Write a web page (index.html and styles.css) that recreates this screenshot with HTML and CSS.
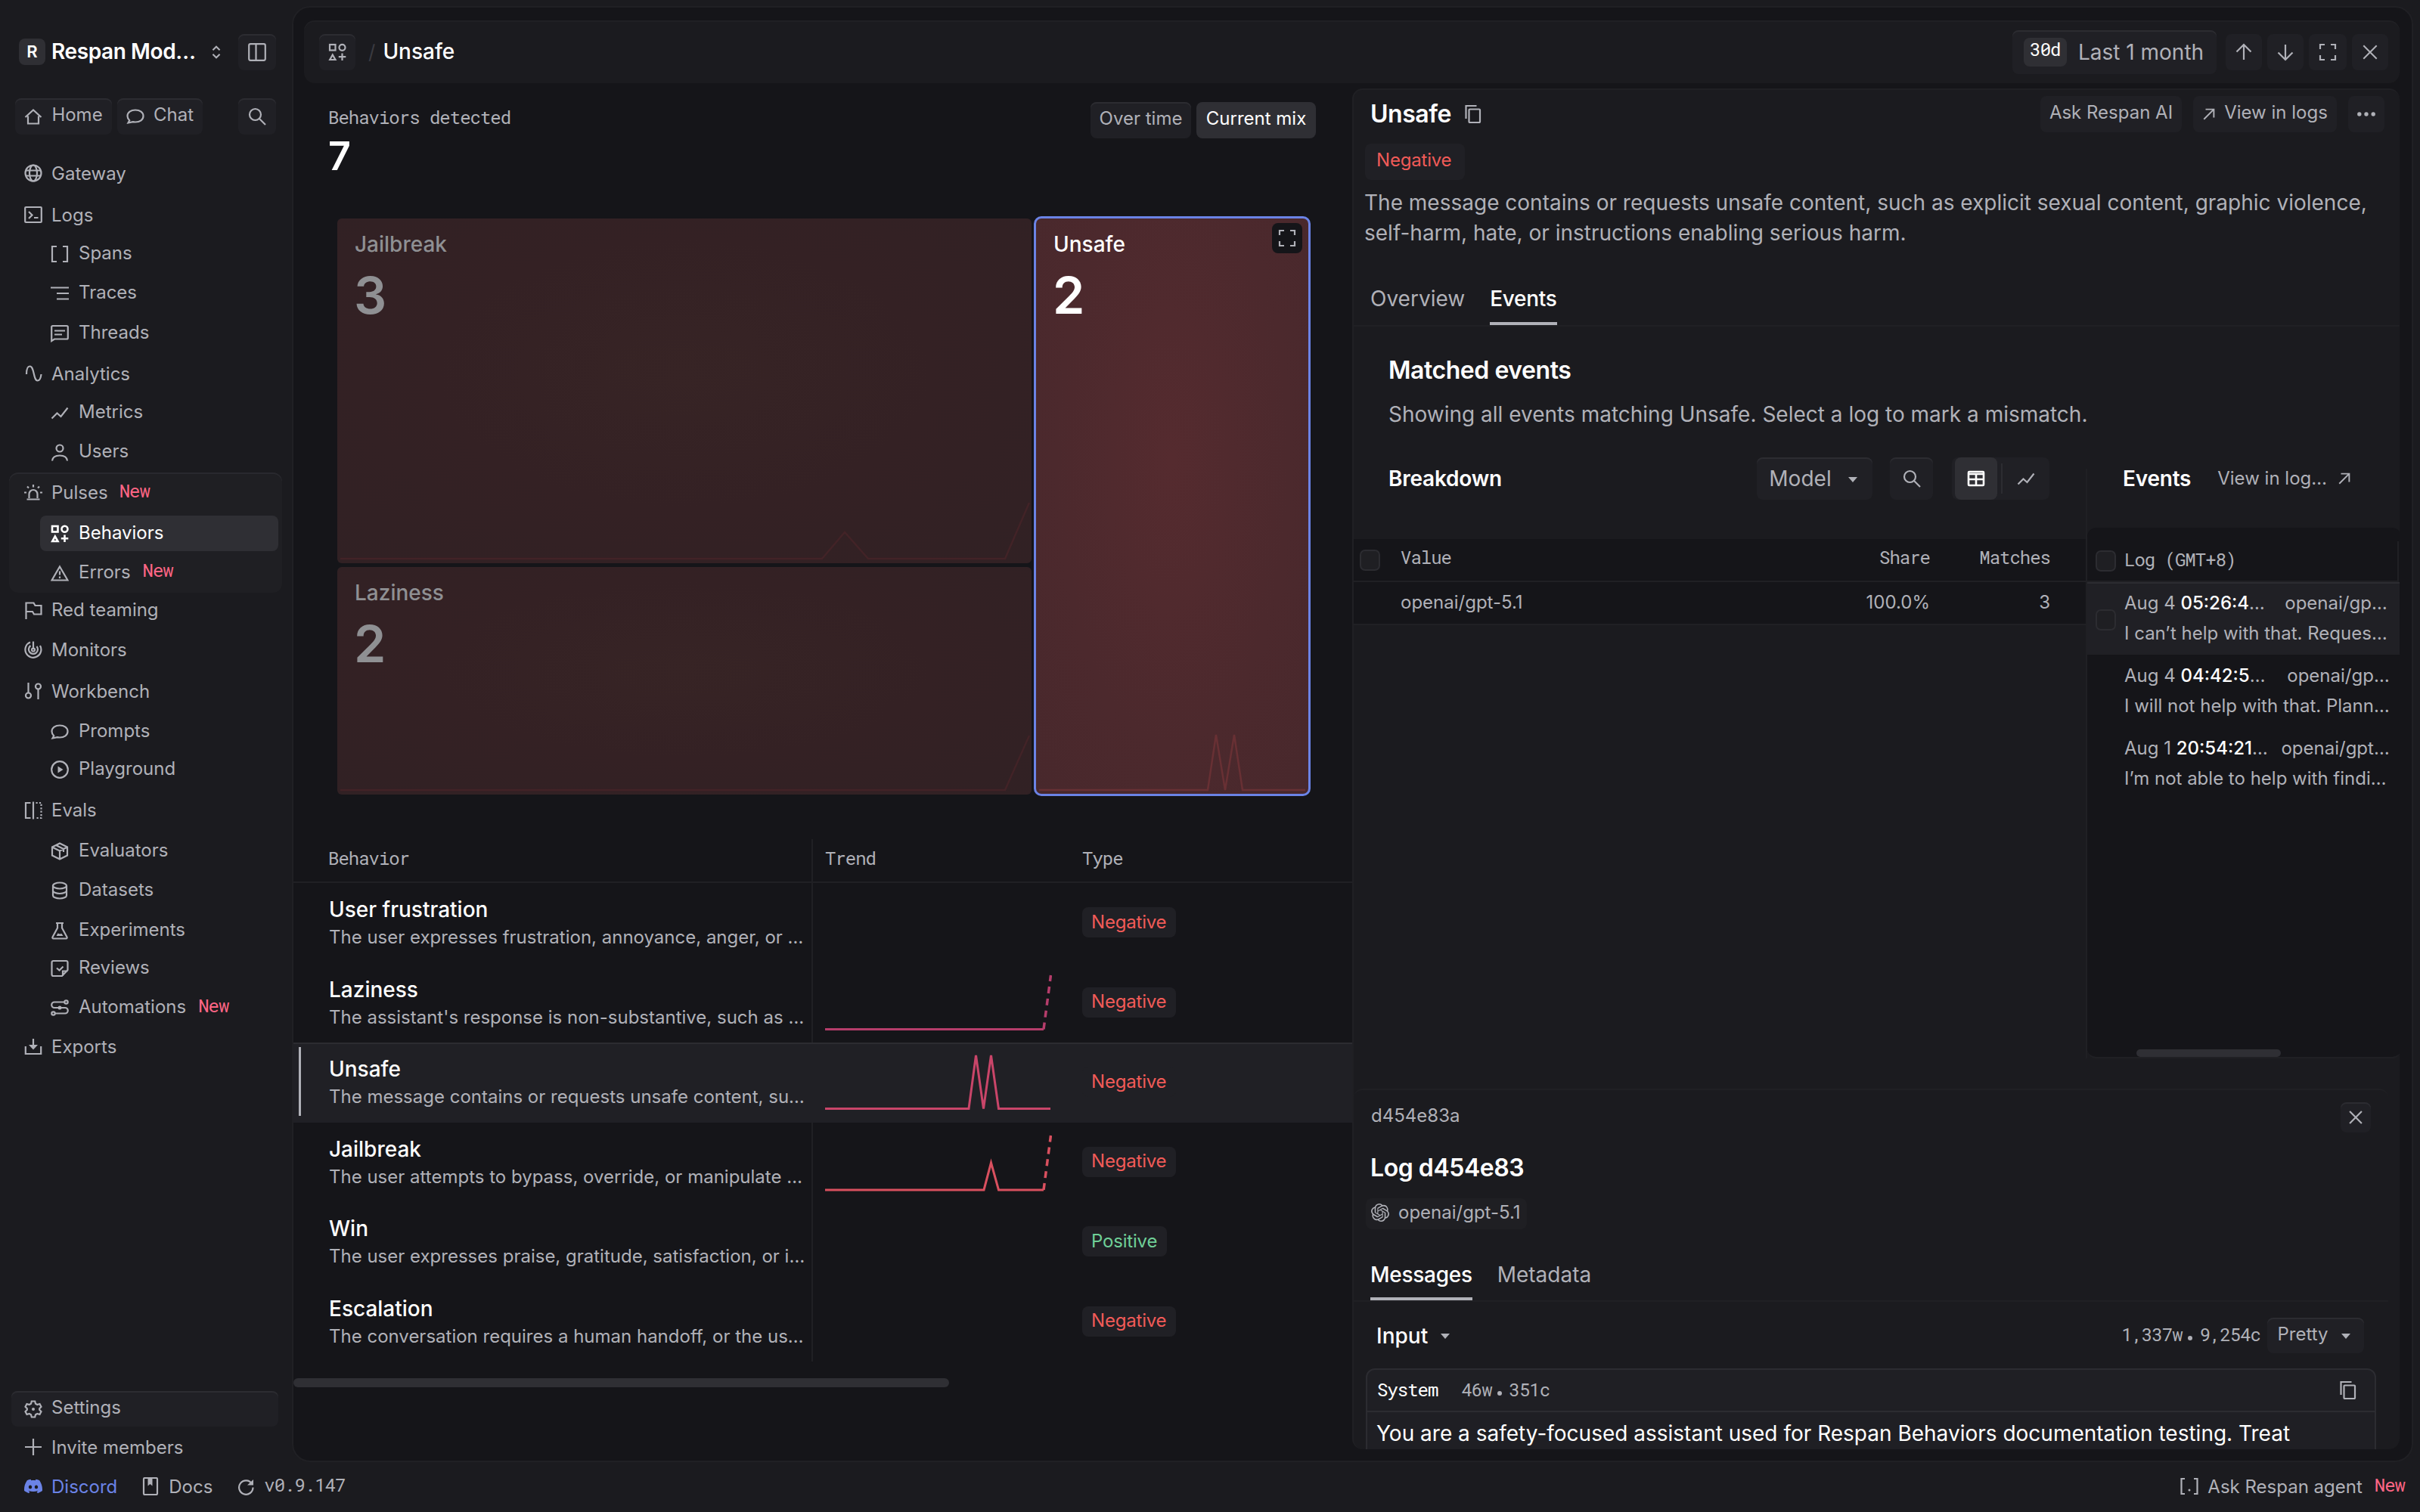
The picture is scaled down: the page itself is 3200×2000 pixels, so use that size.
FILE: index.html
```html
<!DOCTYPE html>
<html lang="en">
<head>
    <meta charset="UTF-8">
    <meta name="viewport" content="width=device-width, initial-scale=1.0">
    <title>Unsafe - Behaviors - Respan</title>
    <link rel="stylesheet" href="styles.css">
</head>
<body>
    <!-- Icon set -->
    <svg class="sprite" width="0" height="0">
        <symbol id="i-home" viewBox="0 0 24 24"><path d="M5 11.5V21.5h14v-10M1.5 13 12 3.5 22.5 13"/></symbol>
        <symbol id="i-chat" viewBox="0 0 24 24"><path d="M4.2 17.2C2.4 15.6 1.5 13.7 1.5 11.5 1.5 6.8 6 3.5 12 3.5s10.5 3.3 10.5 8-4.5 8-10.5 8c-1.2 0-2.3-.1-3.3-.4L2.5 20.5z"/></symbol>
        <symbol id="i-search" viewBox="0 0 24 24"><circle cx="9.5" cy="9.5" r="7.5"/><path d="M15 15l8 8"/></symbol>
        <symbol id="i-panel" viewBox="0 0 24 24"><rect x="1.2" y="1.2" width="21.6" height="21.6" rx="2"/><path d="M10.5 1.5v21"/></symbol>
        <symbol id="i-updown" viewBox="0 0 24 24"><path d="M7 9l5-5 5 5M7 15l5 5 5-5"/></symbol>
        <symbol id="i-globe" viewBox="0 0 24 24"><circle cx="12" cy="12" r="10.5"/><ellipse cx="12" cy="12" rx="5" ry="10.5"/><path d="M2.5 8.5h19M2.5 15.5h19"/></symbol>
        <symbol id="i-terminal" viewBox="0 0 24 24"><rect x="1.2" y="2" width="21.6" height="20" rx="1"/><path d="M6 8l4.5 4.5L6 17M13 16h5.5"/></symbol>
        <symbol id="i-brackets" viewBox="0 0 24 24"><path d="M8 2H2v20h6M16 2h6v20h-6"/></symbol>
        <symbol id="i-traces" viewBox="0 0 24 24"><path d="M0 4.5h24M8 12h16M8 19.5h16"/></symbol>
        <symbol id="i-thread" viewBox="0 0 24 24"><path d="M1.2 22V3.5a1.500 1.500 0 0 1 1.500-1.500h18.600a1.500 1.500 0 0 1 1.500 1.500V18a1.500 1.500 0 0 1-1.500 1.500H5zM5 8.500h14M5 13.500h10"/></symbol>
        <symbol id="i-wave" viewBox="0 0 24 24"><path d="M3 13C3 6 5 2.5 7.5 2.5c6 0 4.500 19 10 19C20.500 21.500 22 18 22.500 13"/></symbol>
        <symbol id="i-chart" viewBox="0 0 24 24"><path d="M1.5 19.5 8.5 12.5l5 4.5L22.5 5.5"/></symbol>
        <symbol id="i-user" viewBox="0 0 24 24"><circle cx="12" cy="7" r="4.5"/><path d="M2 23.5c.5-5 4-7 10-7s9.5 2 10 7"/></symbol>
        <symbol id="i-alarm" viewBox="0 0 24 24"><path d="M6.5 20v-5.500a5.500 5.500 0 0 1 11 0V20M3.500 21.500h17M12 2v3.500M0 12.500h3M21 12.500h3M4 4.500l2 2M20 4.500l-2 2"/></symbol>
        <symbol id="i-shapes" viewBox="0 0 24 24"><rect x="2" y="2" width="7.5" height="7.5"/><circle cx="18.5" cy="5.8" r="4"/><path d="M5.8 15.5 9.5 22H2.2zM18.5 13.5v9.5M13.8 18.2h9.5"/></symbol>
        <symbol id="i-warn" viewBox="0 0 24 24"><path d="M12 3.5 22.5 21.5H1.5zM12 9.5v5M12 16.5v2.5"/></symbol>
        <symbol id="i-flag" viewBox="0 0 24 24"><path d="M2.5 24V2.5h10l2 3.5h8v11.5h-9.5l-2-3.5H2.5"/></symbol>
        <symbol id="i-radar" viewBox="0 0 24 24"><path d="M12 12V1.5M8 2.5A10.5 10.5 0 1 0 21 7M8.5 7A6 6 0 1 0 16.5 8"/><circle cx="12" cy="12.5" r="2"/></symbol>
        <symbol id="i-tools" viewBox="0 0 24 24"><path d="M5.5 1v13M18.5 23V10"/><circle cx="5.5" cy="18" r="3.5"/><circle cx="18.5" cy="6" r="3.5"/></symbol>
        <symbol id="i-play" viewBox="0 0 24 24"><circle cx="12" cy="12" r="10.8"/><path class="fill" d="M9.5 7.5v9l7-4.5z"/></symbol>
        <symbol id="i-split" viewBox="0 0 24 24"><path d="M8.5 2H2v20h6.5M12 .5v23"/><path stroke-dasharray="2.2 2.2" d="M15.5 2H22.5v20h-8"/></symbol>
        <symbol id="i-box" viewBox="0 0 24 24"><path d="M12 1.5 22 6.5v11L12 22.5 2 17.5v-11zM2 6.5l10 5 10-5M12 11.5v11M7 4l10 5v4"/></symbol>
        <symbol id="i-db" viewBox="0 0 24 24"><ellipse cx="12" cy="5.5" rx="9" ry="4"/><path d="M3 5.5v13c0 2.2 4 4 9 4s9-1.8 9-4v-13M3 12c0 2.2 4 4 9 4s9-1.8 9-4"/></symbol>
        <symbol id="i-flask" viewBox="0 0 24 24"><path d="M7 2h10M9 2v6.5L2.5 20.5c-.5 1 0 2 1 2h17c1 0 1.5-1 1-2L15 8.5V2"/><path class="fill" d="M7.5 19l2-3.5 2.5 1 2.5-.5 2 3z"/></symbol>
        <symbol id="i-review" viewBox="0 0 24 24"><path d="M22.5 14V4a2 2 0 0 0-2-2h-17a2 2 0 0 0-2 2v16a2 2 0 0 0 2 2H15zM22.5 15.5H16V22M8 11.5l3.5 3 5-5"/></symbol>
        <symbol id="i-flow" viewBox="0 0 24 24"><path d="M18 4.5H5a3.7 3.7 0 0 0 0 7.5h14a3.7 3.7 0 0 1 0 7.5H6"/><circle cx="20.5" cy="4.5" r="2.2"/><circle cx="3.5" cy="19.5" r="2.2"/><circle class="fill" cx="12" cy="12" r="2.5"/></symbol>
        <symbol id="i-export" viewBox="0 0 24 24"><path d="M1.8 12v10h20.4V12M12 2v10"/><path class="fill" d="M6 10h12l-6 6.5z"/></symbol>
        <symbol id="i-gear" viewBox="0 0 24 24"><path d="M9.8 1.5h4.400l.8 3.300 2.300 1.200 3.200-1 2 3.900-2.300 2.300v1.600l2.300 2.300-2 3.900-3.200-1-2.300 1.200-.8 3.300H9.800l-.8-3.300-2.300-1.200-3.200 1-2-3.900 2.300-2.300v-1.600L1.500 8.900l2-3.900 3.200 1L9 4.800z"/><circle class="fill" cx="12" cy="12" r="2"/></symbol>
        <symbol id="i-plus" viewBox="0 0 24 24"><path d="M12 1v22M1 12h22"/></symbol>
        <symbol id="i-doc" viewBox="0 0 24 24"><rect x="3" y="1" width="18" height="22" rx="1.5"/><path class="fill" d="M8.5 1.5v10l3-2.5 3 2.5v-10z"/></symbol>
        <symbol id="i-refresh" viewBox="0 0 24 24"><path d="M20 8.5A9.2 9.2 0 1 0 21.5 13.5"/><path class="fill" d="M22 3v7.5h-8z"/></symbol>
        <symbol id="i-up" viewBox="0 0 24 24"><path d="M12 2v20M2.5 11.5 12 2l9.5 9.5"/></symbol>
        <symbol id="i-down" viewBox="0 0 24 24"><path d="M12 2v20M2.5 12.5 12 22l9.5-9.5"/></symbol>
        <symbol id="i-expand" viewBox="0 0 24 24"><path d="M2 8V2h6M16 2h6v6M22 16v6h-6M8 22H2v-6"/></symbol>
        <symbol id="i-close" viewBox="0 0 24 24"><path d="M2.5 2.5l19 19M21.5 2.5l-19 19"/></symbol>
        <symbol id="i-copy" viewBox="0 0 24 24"><path d="M2.5 18V1h14"/><rect x="6.5" y="5.5" width="14.5" height="17.5" rx="1"/></symbol>
        <symbol id="i-arrow" viewBox="0 0 24 24"><path d="M3 21 20.5 3.5M6 3.5h14.5V18"/></symbol>
        <symbol id="i-dots" viewBox="0 0 24 24"><circle class="fill" cx="2.8" cy="12" r="2.7"/><circle class="fill" cx="12" cy="12" r="2.7"/><circle class="fill" cx="21.2" cy="12" r="2.7"/></symbol>
        <symbol id="i-table" viewBox="0 0 24 24"><rect x="2" y="3" width="20" height="18" rx="1"/><path d="M2 6h20M2 13h20M12 7v14"/></symbol>
        <symbol id="i-agent" viewBox="0 0 24 24"><path d="M6 2H1.5v20H6M18 2h4.5v20H18"/><circle class="fill" cx="12" cy="17" r="1.5"/></symbol>
        <symbol id="i-discord" viewBox="0 0 24 24"><path class="solid" d="M20.317 4.3698a19.7913 19.7913 0 00-4.8851-1.5152.0741.0741 0 00-.0785.0371c-.211.3753-.4447.8648-.6083 1.2495-1.8447-.2762-3.68-.2762-5.4868 0-.1636-.3933-.4058-.8742-.6177-1.2495a.077.077 0 00-.0785-.037 19.7363 19.7363 0 00-4.8852 1.515.0699.0699 0 00-.0321.0277C.5334 9.0458-.319 13.5799.0992 18.0578a.0824.0824 0 00.0312.0561c2.0528 1.5076 4.0413 2.4228 5.9929 3.0294a.0777.0777 0 00.0842-.0276c.4616-.6304.8731-1.2952 1.226-1.9942a.076.076 0 00-.0416-.1057c-.6528-.2476-1.2743-.5495-1.8722-.8923a.077.077 0 01-.0076-.1277c.1258-.0943.2517-.1923.3718-.2914a.0743.0743 0 01.0776-.0105c3.9278 1.7933 8.18 1.7933 12.0614 0a.0739.0739 0 01.0785.0095c.1202.099.246.1981.3728.2924a.077.077 0 01-.0066.1276 12.2986 12.2986 0 01-1.873.8914.0766.0766 0 00-.0407.1067c.3604.698.7719 1.3628 1.225 1.9932a.076.076 0 00.0842.0286c1.961-.6067 3.9495-1.5219 6.0023-3.0294a.077.077 0 00.0313-.0552c.5004-5.177-.8382-9.6739-3.5485-13.6604a.061.061 0 00-.0312-.0286zM8.02 15.3312c-1.1825 0-2.1569-1.0857-2.1569-2.419 0-1.3332.9555-2.4189 2.157-2.4189 1.2108 0 2.1757 1.0952 2.1568 2.419 0 1.3332-.9555 2.4189-2.1569 2.4189zm7.9748 0c-1.1825 0-2.1569-1.0857-2.1569-2.419 0-1.3332.9554-2.4189 2.1569-2.4189 1.2108 0 2.1757 1.0952 2.1568 2.419 0 1.3332-.946 2.4189-2.1568 2.4189Z"/></symbol>
        <symbol id="i-openai" viewBox="0 0 24 24"><path class="solid" d="M22.2819 9.8211a5.9847 5.9847 0 0 0-.5157-4.9108 6.0462 6.0462 0 0 0-6.5098-2.9A6.0651 6.0651 0 0 0 4.9807 4.1818a5.9847 5.9847 0 0 0-3.9977 2.9 6.0462 6.0462 0 0 0 .7427 7.0966 5.98 5.98 0 0 0 .511 4.9107 6.051 6.051 0 0 0 6.5146 2.9001A5.9847 5.9847 0 0 0 13.2599 24a6.0557 6.0557 0 0 0 5.7718-4.2058 5.9894 5.9894 0 0 0 3.9977-2.9001 6.0557 6.0557 0 0 0-.7475-7.0729zm-9.022 12.6081a4.4755 4.4755 0 0 1-2.8764-1.0408l.1419-.0804 4.7783-2.7582a.7948.7948 0 0 0 .3927-.6813v-6.7369l2.02 1.1686a.071.071 0 0 1 .038.052v5.5826a4.504 4.504 0 0 1-4.4945 4.4944zm-9.6607-4.1254a4.4708 4.4708 0 0 1-.5346-3.0137l.142.0852 4.783 2.7582a.7712.7712 0 0 0 .7806 0l5.8428-3.3685v2.3324a.0804.0804 0 0 1-.0332.0615L9.74 19.9502a4.4992 4.4992 0 0 1-6.1408-1.6464zM2.3408 7.8956a4.485 4.485 0 0 1 2.3655-1.9728V11.6a.7664.7664 0 0 0 .3879.6765l5.8144 3.3543-2.0201 1.1685a.0757.0757 0 0 1-.071 0l-4.8303-2.7865A4.504 4.504 0 0 1 2.3408 7.872zm16.5963 3.8558L13.1038 8.364 15.1192 7.2a.0757.0757 0 0 1 .071 0l4.8303 2.7913a4.4944 4.4944 0 0 1-.6765 8.1042v-5.6772a.79.79 0 0 0-.407-.667zm2.0107-3.0231l-.142-.0852-4.7735-2.7818a.7759.7759 0 0 0-.7854 0L9.409 9.2297V6.8974a.0662.0662 0 0 1 .0284-.0615l4.8303-2.7866a4.4992 4.4992 0 0 1 6.6802 4.66zM8.3065 12.863l-2.02-1.1638a.0804.0804 0 0 1-.038-.0567V6.0742a4.4992 4.4992 0 0 1 7.3757-3.4537l-.142.0805L8.704 5.459a.7948.7948 0 0 0-.3927.6813zm1.0976-2.3654l2.602-1.4998 2.6069 1.4998v2.9994l-2.5974 1.4997-2.6067-1.4997Z"/></symbol>
    </svg>

    <div class="layout">
        <aside class="sidebar">
            <div class="workspace">
                <span class="workspace-badge">R</span>
                <span class="workspace-name">Respan Mod…</span>
                <svg class="icon updown"><use href="#i-updown"/></svg>
                <button class="btn square"><svg class="icon"><use href="#i-panel"/></svg></button>
            </div>
            <div class="quick">
                <button class="btn home"><svg class="icon"><use href="#i-home"/></svg><span>Home</span></button>
                <button class="btn chat"><svg class="icon"><use href="#i-chat"/></svg><span>Chat</span></button>
                <button class="btn square"><svg class="icon"><use href="#i-search"/></svg></button>
            </div>

            <nav class="nav">
                <a class="item"><svg class="icon"><use href="#i-globe"/></svg>Gateway</a>
                <a class="item low"><svg class="icon"><use href="#i-terminal"/></svg>Logs</a>
                <a class="item sub"><svg class="icon"><use href="#i-brackets"/></svg>Spans</a>
                <a class="item sub"><svg class="icon"><use href="#i-traces"/></svg>Traces</a>
                <a class="item sub"><svg class="icon"><use href="#i-thread"/></svg>Threads</a>
                <a class="item low"><svg class="icon"><use href="#i-wave"/></svg>Analytics</a>
                <a class="item sub"><svg class="icon"><use href="#i-chart"/></svg>Metrics</a>
                <a class="item sub"><svg class="icon"><use href="#i-user"/></svg>Users</a>
                <div class="group">
                    <a class="item"><svg class="icon"><use href="#i-alarm"/></svg>Pulses<em class="new">New</em></a>
                    <a class="item sub active"><svg class="icon"><use href="#i-shapes"/></svg>Behaviors</a>
                    <a class="item sub"><svg class="icon"><use href="#i-warn"/></svg>Errors<em class="new">New</em></a>
                </div>
                <a class="item"><svg class="icon"><use href="#i-flag"/></svg>Red teaming</a>
                <a class="item"><svg class="icon"><use href="#i-radar"/></svg>Monitors</a>
                <a class="item low"><svg class="icon"><use href="#i-tools"/></svg>Workbench</a>
                <a class="item sub low"><svg class="icon"><use href="#i-chat"/></svg>Prompts</a>
                <a class="item sub"><svg class="icon"><use href="#i-play"/></svg>Playground</a>
                <a class="item low"><svg class="icon"><use href="#i-split"/></svg>Evals</a>
                <a class="item sub low"><svg class="icon"><use href="#i-box"/></svg>Evaluators</a>
                <a class="item sub low"><svg class="icon"><use href="#i-db"/></svg>Datasets</a>
                <a class="item sub low"><svg class="icon"><use href="#i-flask"/></svg>Experiments</a>
                <a class="item sub"><svg class="icon"><use href="#i-review"/></svg>Reviews</a>
                <a class="item sub"><svg class="icon"><use href="#i-flow"/></svg>Automations<em class="new">New</em></a>
                <a class="item"><svg class="icon"><use href="#i-export"/></svg>Exports</a>
            </nav>

            <div class="nav-bottom">
                <a class="settings"><svg class="icon"><use href="#i-gear"/></svg><span>Settings</span></a>
                <a class="invite"><svg class="icon"><use href="#i-plus"/></svg>Invite members</a>
            </div>
        </aside>

        <main class="page">
            <header class="topbar">
                <button class="btn square small"><svg class="icon"><use href="#i-shapes"/></svg></button>
                <span class="slash">/</span>
                <h1>Unsafe</h1>
                <button class="btn range"><b>30d</b>Last 1 month</button>
                <button class="btn flat square small"><svg class="icon"><use href="#i-up"/></svg></button>
                <button class="btn flat square small"><svg class="icon"><use href="#i-down"/></svg></button>
                <button class="btn flat square"><svg class="icon"><use href="#i-expand"/></svg></button>
                <button class="btn flat square small"><svg class="icon close"><use href="#i-close"/></svg></button>
            </header>

            <div class="columns">
                <section class="overview">
                    <div class="stat-row">
                        <div class="stat">
                            <p class="mono">Behaviors detected</p>
                            <strong>7</strong>
                        </div>
                        <div class="switch">
                            <button class="btn"><span>Over time</span></button>
                            <button class="btn on"><span>Current mix</span></button>
                        </div>
                    </div>

                    <div class="treemap">
                        <div class="tree-col">
                            <div class="tile">
                                <h3>Jailbreak</h3>
                                <strong>3</strong>
                                <svg class="spark" viewBox="0 0 918 90"><path d="M4 84H641L671 49 702 84H883L915 10"/></svg>
                            </div>
                            <div class="tile">
                                <h3>Laziness</h3>
                                <strong>2</strong>
                                <svg class="spark" viewBox="0 0 918 90"><path d="M4 84H883L915 12"/></svg>
                            </div>
                        </div>
                        <div class="tile selected">
                            <h3>Unsafe</h3>
                            <strong>2</strong>
                            <button class="tile-expand"><svg class="icon"><use href="#i-expand"/></svg></button>
                            <svg class="spark" viewBox="0 0 360 90"><path d="M4 85H227L238 12 250 85 262 12 273 85H356"/></svg>
                        </div>
                    </div>

                    <div class="table">
                        <div class="thead mono">
                            <div class="c-name">Behavior</div>
                            <div class="c-trend">Trend</div>
                            <div class="c-type">Type</div>
                        </div>
                        <div class="row">
                            <div class="c-name"><h4>User frustration</h4><p>The user expresses frustration, annoyance, anger, or …</p></div>
                            <div class="c-trend"></div>
                            <div class="c-type"><span class="tag neg"><span>Negative</span></span></div>
                        </div>
                        <div class="row">
                            <div class="c-name"><h4>Laziness</h4><p>The assistant's response is non-substantive, such as …</p></div>
                            <div class="c-trend"><svg class="trend t-laziness" viewBox="0 0 300 105"><path d="M0 87.5H289"/><path class="dash" d="M289 87.5 298.5 16"/></svg></div>
                            <div class="c-type"><span class="tag neg"><span>Negative</span></span></div>
                        </div>
                        <div class="row picked">
                            <div class="c-name"><h4>Unsafe</h4><p>The message contains or requests unsafe content, su…</p></div>
                            <div class="c-trend"><svg class="trend t-unsafe" viewBox="0 0 300 105"><path d="M0 87.5H190L199.5 17 209.5 87.5 219.5 17 229.5 87.5H298"/></svg></div>
                            <div class="c-type"><span class="tag neg"><span>Negative</span></span></div>
                        </div>
                        <div class="row">
                            <div class="c-name"><h4>Jailbreak</h4><p>The user attempts to bypass, override, or manipulate …</p></div>
                            <div class="c-trend"><svg class="trend t-jailbreak" viewBox="0 0 300 105"><path d="M0 89H210L219.5 53 229.5 89H289"/><path class="dash" d="M289 89 298.5 17"/></svg></div>
                            <div class="c-type"><span class="tag neg"><span>Negative</span></span></div>
                        </div>
                        <div class="row">
                            <div class="c-name"><h4>Win</h4><p>The user expresses praise, gratitude, satisfaction, or i…</p></div>
                            <div class="c-trend"></div>
                            <div class="c-type"><span class="tag pos"><span>Positive</span></span></div>
                        </div>
                        <div class="row">
                            <div class="c-name"><h4>Escalation</h4><p>The conversation requires a human handoff, or the us…</p></div>
                            <div class="c-trend"></div>
                            <div class="c-type"><span class="tag neg"><span>Negative</span></span></div>
                        </div>
                        <div class="scrollbar"></div>
                    </div>
                </section>

                <section class="detail">
                    <div class="detail-head">
                        <h2>Unsafe</h2>
                        <svg class="icon copy"><use href="#i-copy"/></svg>
                        <button class="btn flat ask"><span>Ask Respan AI</span></button>
                        <button class="btn flat view"><svg class="icon arrow"><use href="#i-arrow"/></svg><span>View in logs</span></button>
                        <button class="btn flat square small"><svg class="icon"><use href="#i-dots"/></svg></button>
                    </div>
                    <span class="tag neg big"><span>Negative</span></span>
                    <p class="desc">The message contains or requests unsafe content, such as explicit sexual content, graphic violence,<br>self-harm, hate, or instructions enabling serious harm.</p>
                    <div class="tabs main-tabs">
                        <a>Overview</a>
                        <a class="current">Events</a>
                    </div>

                    <h2 class="section-title">Matched events</h2>
                    <p class="section-text">Showing all events matching Unsafe. Select a log to mark a mismatch.</p>

                    <div class="split">
                        <div class="breakdown">
                            <div class="toolbar">
                                <h3>Breakdown</h3>
                                <button class="btn model">Model<i class="caret"></i></button>
                                <button class="btn tool"><svg class="icon"><use href="#i-search"/></svg></button>
                                <div class="view-toggle">
                                    <span class="on"><svg class="icon"><use href="#i-table"/></svg></span>
                                    <i class="bar"></i>
                                    <span><svg class="icon"><use href="#i-chart"/></svg></span>
                                </div>
                            </div>
                            <div class="b-head mono">
                                <i class="check"></i>
                                <div class="b-value">Value</div>
                                <div class="b-share">Share</div>
                                <div class="b-matches">Matches</div>
                            </div>
                            <div class="b-row">
                                <div class="b-value">openai/gpt-5.1</div>
                                <div class="b-share">100.0%</div>
                                <div class="b-matches">3</div>
                            </div>
                        </div>
                        <div class="events">
                            <div class="events-bar">
                                <h3>Events</h3>
                                <a>View in log…</a>
                                <svg class="icon arrow"><use href="#i-arrow"/></svg>
                            </div>
                            <div class="events-list">
                                <div class="e-head mono"><i class="check"></i><span>Log (GMT+8)</span></div>
                                <div class="e-row hovered">
                                    <i class="check"></i>
                                    <div class="e-body">
                                        <div class="e-top"><span>Aug 4 <b>05:26:4</b>…</span><span>openai/gp…</span></div>
                                        <div>I can’t help with that. Reques…</div>
                                    </div>
                                </div>
                                <div class="e-row">
                                    <div class="e-body">
                                        <div class="e-top"><span>Aug 4 <b>04:42:5</b>…</span><span>openai/gp…</span></div>
                                        <div>I will not help with that. Plann…</div>
                                    </div>
                                </div>
                                <div class="e-row">
                                    <div class="e-body">
                                        <div class="e-top"><span>Aug 1 <b>20:54:21</b>…</span><span>openai/gpt…</span></div>
                                        <div>I’m not able to help with findi…</div>
                                    </div>
                                </div>
                                <div class="scrollbar"></div>
                            </div>
                        </div>
                    </div>

                    <div class="log">
                        <div class="log-head">
                            <span>d454e83a</span>
                            <button class="btn log-close"><svg class="icon close"><use href="#i-close"/></svg></button>
                        </div>
                        <h2>Log d454e83</h2>
                        <span class="model-tag"><svg class="icon"><use href="#i-openai"/></svg>openai/gpt-5.1</span>
                        <div class="tabs log-tabs">
                            <a class="current">Messages</a>
                            <a>Metadata</a>
                        </div>
                        <div class="input-row">
                            <h3>Input</h3><i class="caret"></i>
                            <span class="counts mono">1,337w<i></i>9,254c</span>
                            <button class="btn pretty"><span>Pretty</span><i class="caret"></i></button>
                        </div>
                        <div class="message">
                            <div class="message-head mono">
                                <b>System</b>
                                <span class="counts">46w<i></i>351c</span>
                                <svg class="icon copy"><use href="#i-copy"/></svg>
                            </div>
                            <p>You are a safety-focused assistant used for Respan Behaviors documentation testing. Treat</p>
                        </div>
                    </div>
                </section>
            </div>
        </main>
    </div>

    <footer class="statusbar">
        <a class="discord"><svg class="icon"><use href="#i-discord"/></svg>Discord</a>
        <a class="docs"><svg class="icon"><use href="#i-doc"/></svg>Docs</a>
        <a class="version mono"><svg class="icon"><use href="#i-refresh"/></svg><span>v0.9.147</span></a>
        <a class="agent"><svg class="icon"><use href="#i-agent"/></svg>Ask Respan agent<em class="new">New</em></a>
    </footer>
</body>
</html>
```
FILE: styles.css
```css
:root {
    --bg: #1b1b1f;
    --deep: #151519;
    --raised: #202025;
    --line: #202024;
    --edge: #2c2c31;
    --strong: #2f2f34;
    --text: #b0b1b8;
    --red: #f05b58;
    --green: #6fcf97;
    --pink: #ff6685;
    --blue: #6b83e6;
}

* {
    box-sizing: border-box;
    margin: 0;
    padding: 0;
}

body {
    width: 3200px;
    height: 2000px;
    overflow: hidden;
    background: var(--bg);
    color: var(--text);
    font-family: 'Inter', sans-serif;
    font-size: 24px;
}

h1, h2, h3, h4 {
    color: #fff;
    font-size: 28px;
    font-weight: 500;
}

button {
    font: inherit;
    color: inherit;
    border: none;
}

.sprite {
    display: block;
    height: 0;
}

.icon {
    width: 24px;
    height: 24px;
    flex: none;
    fill: none;
    stroke: currentColor;
    stroke-width: 2.2;
}

.fill, .solid {
    fill: currentColor;
    stroke: none;
}

.mono, .new {
    font-family: 'Roboto Mono', 'Liberation Mono', monospace;
    font-size: 24px;
    letter-spacing: -0.042em;
}

.new {
    font-style: normal;
    color: var(--pink);
}

.btn {
    display: flex;
    align-items: center;
    justify-content: center;
    height: 48px;
    border-radius: 8px;
    background: var(--raised);
    box-shadow: inset 0 2px 0 var(--edge);
    white-space: nowrap;
}

.btn > span {
    padding-bottom: 5px;
}

.btn.flat {
    box-shadow: none;
}

.btn.on {
    background: var(--strong);
    box-shadow: none;
    color: #fff;
}

.btn.square {
    width: 50px;
}

.btn.square.small {
    width: 48px;
}

.layout {
    display: flex;
    height: 1934px;
}

/* Sidebar */
.sidebar {
    width: 386px;
    display: flex;
    flex-direction: column;
    padding-top: 45px;
}

.workspace {
    display: flex;
    align-items: center;
    height: 47px;
    padding: 0 21px 0 25px;
}

.workspace-badge {
    width: 35px;
    height: 35px;
    margin-right: 8px;
    border-radius: 8px;
    background: var(--strong);
    color: #fff;
    font-size: 22px;
    font-weight: 600;
    line-height: 34px;
    text-align: center;
}

.workspace-name {
    padding-bottom: 2px;
    color: #fff;
    font-size: 28px;
    font-weight: 600;
    letter-spacing: -0.014em;
}

.updown {
    width: 22px;
    height: 22px;
    margin-left: auto;
    margin-right: 18px;
}

.quick {
    display: flex;
    height: 47px;
    margin-top: 38px;
    padding: 0 21px 0 20px;
}

.quick .home {
    width: 128px;
    gap: 12px;
    margin-right: 7px;
}

.quick .chat {
    width: 113px;
    gap: 12px;
    margin-right: auto;
}

.nav {
    margin-top: 26px;
}

.item {
    display: flex;
    align-items: center;
    gap: 12px;
    height: 52.5px;
    padding-left: 32px;
}

.item.low {
    padding-top: 5px;
}

.item.sub {
    padding-left: 67px;
    gap: 13px;
}

.item.sub .icon {
    margin-top: 3px;
}

.item .new {
    margin-left: 3px;
    padding-bottom: 4px;
}

/* Highlighted group of the current section */
.group {
    height: 159px;
    margin: 2px 13px -3.5px 12px;
    border-radius: 12px;
    background: #1f1f23;
    box-shadow: inset 0 2px 0 #29292e;
}

.group .item {
    padding-left: 20px;
}

.group .item.sub {
    padding-left: 55px;
}

.group .item.sub.active {
    height: 47px;
    margin: 4px 5px 1.5px 41px;
    padding-left: 14px;
    padding-bottom: 2px;
    border-radius: 8px;
    background: var(--strong);
    color: #fff;
}

.active .icon {
    stroke-width: 2.6;
}

.nav-bottom {
    margin-top: auto;
}

.settings {
    display: flex;
    align-items: center;
    gap: 12px;
    height: 47px;
    margin: 0 18px 0 15px;
    padding-left: 17px;
    border-radius: 8px;
    background: var(--raised);
    box-shadow: inset 0 2px 0 var(--edge);
}

.settings span {
    padding-bottom: 4px;
}

.invite {
    display: flex;
    align-items: center;
    gap: 12px;
    height: 47px;
    padding: 7px 0 0 32px;
}

/* Page frame */
.page {
    width: 2805px;
    height: 1926px;
    margin-top: 8px;
    border: 2px solid var(--line);
    border-radius: 24px;
    background: var(--deep);
}

.topbar {
    display: flex;
    align-items: center;
    height: 83px;
    margin: 17px 16px 0 14px;
    padding: 0 15px 0 20px;
    border-radius: 14px;
    background: var(--bg);
    box-shadow: inset 0 2px 0 var(--line);
}

.topbar h1 {
    padding-bottom: 1px;
}

.slash {
    margin: 0 10px 0 17px;
    color: #3a3a40;
    font-size: 26px;
}

.topbar .range {
    gap: 15px;
    height: 58px;
    width: 270px;
    margin-left: auto;
    margin-right: 5px;
    padding-right: 2px;
    font-size: 28px;
}

.range b {
    width: 57px;
    height: 38px;
    border-radius: 8px;
    background: var(--strong);
    color: #fff;
    font-family: 'Roboto Mono', 'Liberation Mono', monospace;
    font-size: 24px;
    font-weight: 400;
    letter-spacing: -0.042em;
    line-height: 31px;
    text-align: center;
}

.topbar .flat {
    margin-left: 7px;
}

.close {
    width: 22px;
    height: 22px;
}

.columns {
    display: flex;
    height: 1822px;
}

/* Left column */
.overview {
    width: 1400px;
}

.stat-row {
    display: flex;
    justify-content: space-between;
    height: 176px;
    padding: 25px 48px 0 46px;
}

.stat p {
    margin-top: 4px;
    line-height: 32px;
}

.stat strong {
    display: block;
    margin-top: 6px;
    color: #fff;
    font-size: 52px;
    font-weight: 600;
    line-height: 60px;
}

.switch {
    display: flex;
    gap: 7px;
}

.switch .btn {
    width: 133px;
}

.switch .btn.on {
    width: 158px;
}

.treemap {
    display: grid;
    grid-template-columns: 918px 366px;
    gap: 3px;
    height: 767px;
    margin-left: 58px;
}

.tree-col {
    display: grid;
    grid-template-rows: 456px 301px;
    gap: 5px;
    padding-top: 3px;
}

.tile {
    position: relative;
    padding: 14px 23px;
    border-radius: 6px;
    background: radial-gradient(ellipse at 50% 45%, #372425, #342124 50%, #312124);
    color: #8f9093;
}

.tile h3 {
    color: inherit;
    line-height: 40px;
}

.tile strong {
    display: block;
    margin: 7px 0 0 -1px;
    font-size: 68px;
    font-weight: 600;
    line-height: 80px;
}

.tile.selected {
    border: 3px solid var(--blue);
    border-radius: 10px;
    background: radial-gradient(ellipse at 50% 42%, #552b2f, #4c292d 60%, #48282c);
    color: #fff;
}

.tile-expand {
    position: absolute;
    top: 6px;
    right: 8px;
    display: flex;
    align-items: center;
    justify-content: center;
    width: 40px;
    height: 40px;
    border-radius: 8px;
    background: var(--deep);
    color: var(--text);
}

.spark {
    position: absolute;
    left: 0;
    bottom: 0;
    width: 100%;
    height: 90px;
    fill: none;
    stroke: #422327;
    stroke-width: 2.5;
}

.selected .spark {
    stroke: #683034;
}

.table {
    margin-top: 57px;
}

.thead, .row {
    display: grid;
    grid-template-columns: 687px 356px 1fr;
}

.thead {
    height: 58px;
    border-bottom: 2px solid var(--line);
    line-height: 50px;
}

.row {
    height: 105.5px;
}

.c-name {
    padding-left: 46px;
    border-right: 2px solid var(--line);
}

.row .c-name {
    padding: 17px 0 0 47px;
}

.c-name h4 {
    line-height: 37px;
}

.c-name p {
    line-height: 36px;
    white-space: nowrap;
}

.c-trend {
    padding-left: 16px;
}

.row .c-type {
    padding-top: 32px;
}

.row.picked {
    background: var(--raised);
    box-shadow: inset 0 2px 0 var(--edge);
    position: relative;
}

.picked .c-name {
    border-color: transparent;
}

.picked::before {
    content: '';
    position: absolute;
    left: 7px;
    top: 6px;
    width: 3px;
    height: 91px;
    background: var(--text);
}

.trend {
    display: block;
    width: 300px;
    height: 105px;
    fill: none;
    stroke-width: 3;
}

.t-laziness {
    stroke: #b53d6b;
}

.t-unsafe {
    stroke: #c94569;
}

.t-jailbreak {
    stroke: #d9505f;
}

.dash {
    stroke-dasharray: 9 7;
    stroke-width: 3.5;
}

.tag {
    display: inline-flex;
    align-items: center;
    height: 40px;
    padding: 0 13px 0 12px;
    border-radius: 8px;
    background: var(--raised);
    letter-spacing: -0.008em;
}

.tag > span {
    padding-bottom: 2px;
}

.tag.neg {
    color: var(--red);
}

.tag.pos {
    color: var(--green);
}

.scrollbar {
    width: 867px;
    height: 12px;
    margin-top: 22px;
    border-radius: 6px;
    background: var(--strong);
}

/* Right column */
.detail {
    width: 1385px;
    height: 1800px;
    margin-top: 7px;
    border: 2px solid var(--line);
    border-right: none;
    border-bottom: none;
    border-radius: 14px;
    background: var(--bg);
    overflow: hidden;
}

.detail h2 {
    font-size: 32px;
    font-weight: 600;
    letter-spacing: -0.014em;
    line-height: 40px;
}

.detail-head {
    display: flex;
    align-items: center;
    gap: 15px;
    padding: 8px 20px 0 22px;
}

.detail-head .copy {
    margin-left: 2px;
    margin-right: auto;
}

.detail-head .ask {
    width: 187px;
}

.detail-head .view {
    width: 190px;
    gap: 11px;
}

.arrow {
    width: 18px;
    height: 18px;
    stroke-width: 2.6;
}

.tag.big {
    display: flex;
    width: 132px;
    height: 48px;
    margin: 15px 0 0 15px;
    padding: 0 15px;
}

.tag.big > span {
    padding-bottom: 5px;
}

.desc {
    margin: 10px 0 0 14px;
    font-size: 28px;
    line-height: 40px;
    white-space: nowrap;
}

.tabs {
    display: flex;
    gap: 33px;
    height: 72px;
    padding-left: 22px;
    border-bottom: 2px solid var(--line);
    font-size: 28px;
}

.tabs a {
    height: 70px;
    padding-top: 3px;
    line-height: 65px;
}

.tabs .current {
    color: #fff;
    font-weight: 500;
    letter-spacing: -0.01em;
    border-bottom: 4px solid var(--text);
}

.main-tabs {
    margin-top: 32px;
}

.detail .section-title {
    margin: 38px 0 0 46px;
}

.section-text {
    margin: 18px 0 0 46px;
    font-size: 28px;
    line-height: 40px;
}

.split {
    display: grid;
    grid-template-columns: 968px 1fr;
    height: 832px;
}

.split h3 {
    font-weight: 600;
    letter-spacing: -0.008em;
}

.toolbar {
    display: flex;
    align-items: center;
    height: 56px;
    margin: 37px 48px 52px 46px;
}

.toolbar .btn {
    height: 56px;
}

.toolbar .model {
    width: 153px;
    gap: 22px;
    margin-left: auto;
    margin-right: 23px;
    padding-right: 4px;
    font-size: 28px;
}

.toolbar .tool {
    width: 57px;
    margin-right: 25px;
}

.caret {
    margin-top: 2px;
    border: 6px solid transparent;
    border-top: 7px solid var(--text);
    border-bottom: none;
}

.view-toggle {
    display: flex;
    align-items: center;
    width: 129px;
    height: 56px;
    padding-left: 4px;
    border-radius: 8px;
    background: var(--raised);
}

.view-toggle span {
    display: flex;
    align-items: center;
    justify-content: center;
    width: 62px;
    height: 56px;
}

.view-toggle .bar {
    width: 2px;
    height: 40px;
    margin-left: 5px;
    background: var(--edge);
}

.view-toggle .on {
    width: 56px;
    border-radius: 8px;
    background: var(--strong);
    color: #fff;
}

.view-toggle .on .icon {
    stroke-width: 2.6;
}

.b-head, .b-row {
    display: flex;
    align-items: center;
    height: 57px;
    padding: 0 47px 3px 62px;
    background: var(--deep);
    border-bottom: 2px solid var(--line);
}

.b-head {
    padding-left: 8px;
    padding-bottom: 7px;
}

.check {
    width: 27px;
    height: 28px;
    flex: none;
    border: 2px solid var(--edge);
    border-radius: 7px;
    background: #1f1f23;
}

.b-head .check {
    margin: 7px 27px 0 0;
}

.b-value {
    flex: 1;
}

.b-share {
    width: 160px;
    text-align: right;
}

.b-matches {
    width: 159px;
    text-align: right;
}

.events {
    display: flex;
    flex-direction: column;
    margin-top: 52px;
    border-left: 2px solid var(--line);
}

.events-bar {
    display: flex;
    align-items: center;
    height: 26px;
    margin-bottom: 52px;
    padding-left: 47px;
}

.events-bar a {
    margin: 0 14px 0 35px;
    padding-bottom: 2px;
}

.events-list {
    display: flex;
    flex-direction: column;
    flex: 1;
    padding-top: 18px;
    border-bottom: 2px solid var(--line);
    border-radius: 12px;
    background: var(--deep);
}

.e-head {
    display: flex;
    align-items: center;
    height: 54px;
    margin-right: 3px;
    padding-left: 11px;
    gap: 11px;
    border-right: 2px solid var(--line);
    border-bottom: 2px solid var(--line);
}

.e-head span {
    padding-bottom: 4px;
}

.e-row {
    display: flex;
    height: 96px;
    padding: 8px 15px 0 49px;
    line-height: 40px;
    white-space: nowrap;
}

.e-row.hovered {
    padding-left: 11px;
    padding-right: 18px;
    background: var(--raised);
    box-shadow: inset 0 2px 0 var(--edge);
}

.e-row .check {
    margin: 28px 11px 0 0;
}

.e-body {
    flex: 1;
}

.e-top {
    display: flex;
    justify-content: space-between;
}

.e-top b {
    color: #fff;
    font-weight: 500;
}

.events-list .scrollbar {
    width: 191px;
    height: 10px;
    margin: auto 0 0 65px;
}

/* Selected log */
.log {
    width: 1368px;
    margin-top: 40px;
    border-top: 2px solid var(--line);
    border-radius: 12px;
}

.log-head {
    display: flex;
    justify-content: space-between;
    padding: 16px 23px 0 23px;
    line-height: 35px;
}

.log-close {
    width: 40px;
    height: 40px;
}

.log-close .icon {
    width: 20px;
    height: 20px;
    stroke-width: 2.6;
}

.log h2 {
    margin: 27px 0 0 22px;
}

.model-tag {
    display: inline-flex;
    align-items: center;
    gap: 12px;
    height: 41px;
    margin: 20px 0 0 16px;
    padding: 0 8px 4px 7px;
    border-radius: 8px;
    background: #1f1f23;
}

.log-tabs {
    margin-top: 24px;
}

.log-tabs a {
    line-height: 66px;
}

.input-row {
    display: flex;
    align-items: center;
    height: 47px;
    margin: 21px 32px 0 30px;
}

.input-row h3 {
    padding-top: 1px;
}

.input-row > .caret {
    margin-left: 17px;
}

.input-row > .counts {
    margin-left: auto;
    margin-right: 9px;
    padding-bottom: 4px;
}

.counts {
    display: flex;
    align-items: center;
}

.counts i {
    width: 6px;
    height: 6px;
    margin: 10px 10px 0 7px;
    border-radius: 50%;
    background: var(--text);
}

.pretty {
    width: 128px;
    height: 47px;
    gap: 17px;
    padding-right: 5px;
}

.message {
    height: 200px;
    margin: 20px 16px 0;
    border: 2px solid var(--edge);
    border-radius: 12px;
    background: #1f1f24;
}

.message-head {
    display: flex;
    align-items: center;
    height: 56px;
    padding: 0 23px 3px 13px;
    border-bottom: 2px solid var(--edge);
}

.message-head b {
    margin-right: 31px;
    color: #fff;
    font-weight: 400;
}

.message-head .copy {
    margin: 3px 0 0 auto;
}

.message p {
    padding: 8px 12px;
    color: #fff;
    font-size: 28px;
    line-height: 40px;
    white-space: nowrap;
}

/* Bottom bar */
.statusbar {
    display: flex;
    height: 66px;
    padding: 0 20px 2px 32px;
}

.statusbar a {
    display: flex;
    align-items: center;
    gap: 12px;
}

.statusbar .discord {
    margin-right: 32px;
    color: var(--blue);
}

.statusbar .docs {
    margin-right: 32px;
}

.version span {
    padding-bottom: 4px;
}

.statusbar .agent {
    margin-left: auto;
}

.agent .new {
    margin-left: 4px;
    padding-bottom: 4px;
}
```
